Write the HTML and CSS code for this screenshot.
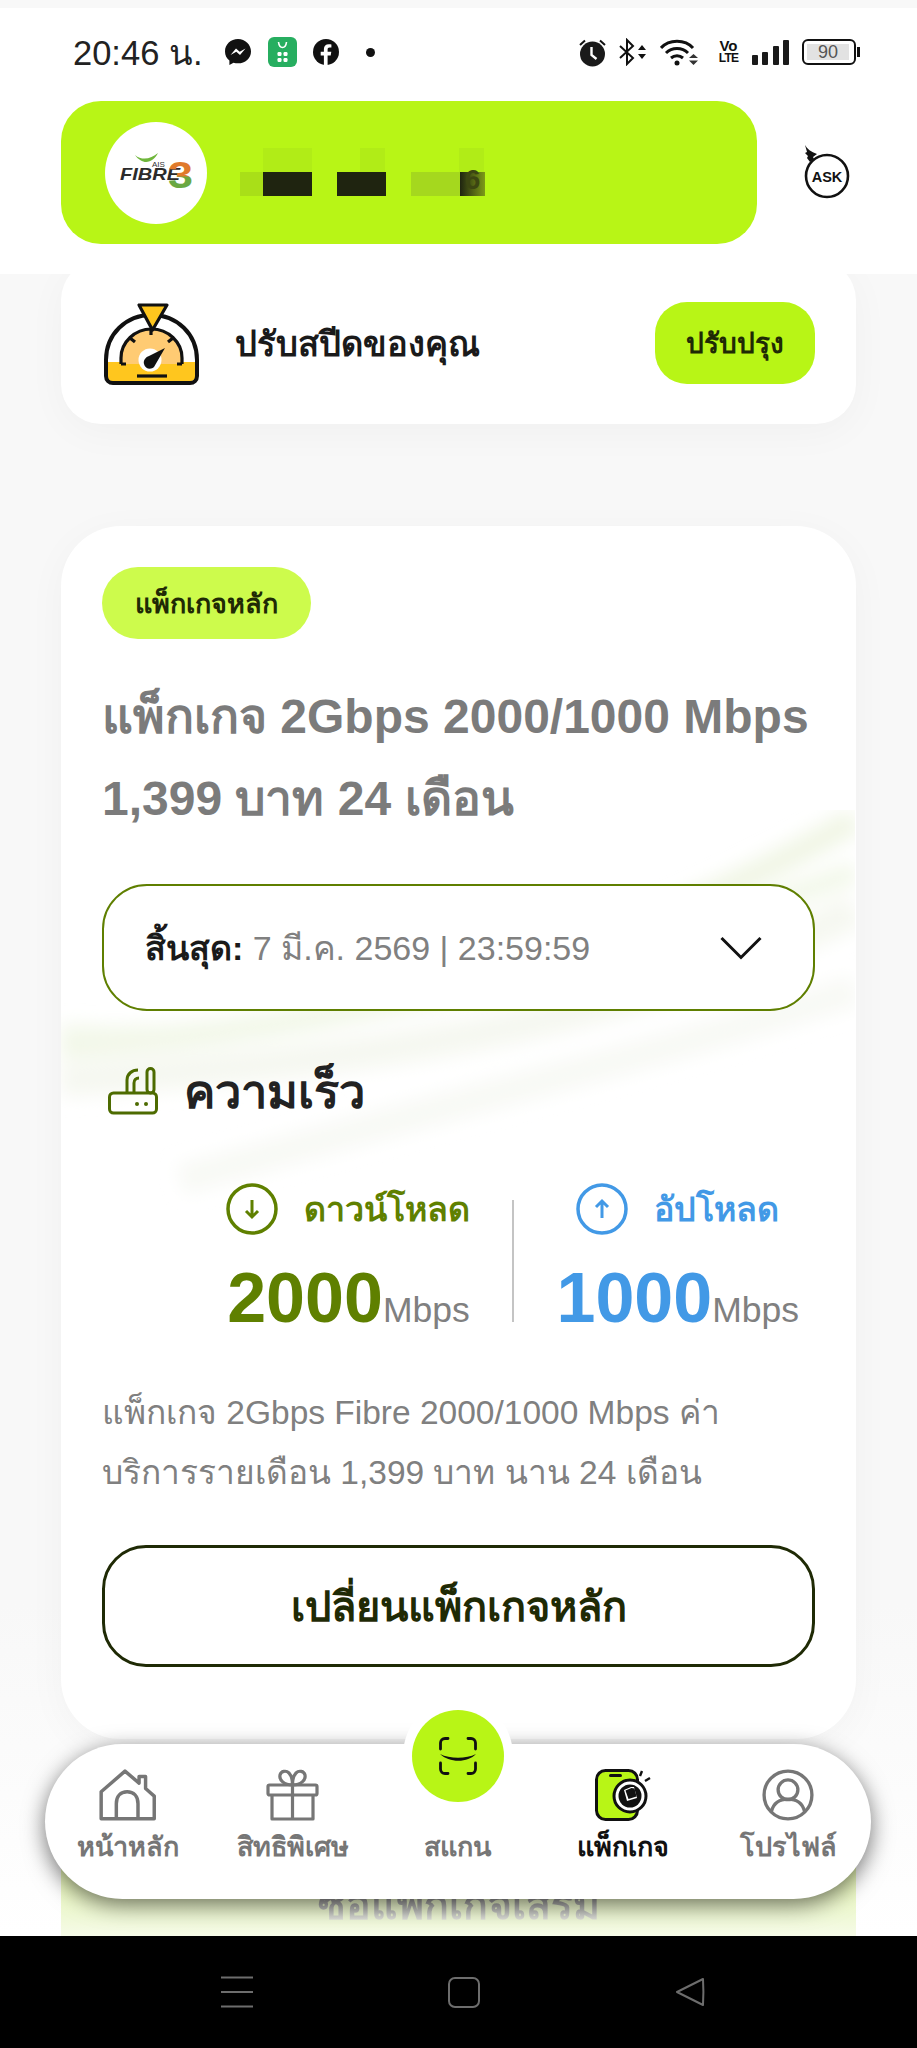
FILE: index.html
```html
<!DOCTYPE html>
<html lang="th">
<head>
    <meta charset="UTF-8">
    <meta name="viewport" content="width=device-width, initial-scale=1.0">
    <title>แพ็กเกจ</title>
    <link rel="stylesheet" href="styles.css">
</head>
<body>
<div class="screen">
    <header class="top">
        <div class="status">
            <div class="status-left">
                <span class="time">20:46 น.</span>
                <svg class="st-msg" viewBox="0 0 26 26"><path d="M13 0C5.800 0 0 5.400 0 12.400c0 3.800 1.700 6.900 4.400 9.100V26l4.100-2.300c1.400.4 2.900.6 4.500.6 7.200 0 13-5.200 13-11.900S20.200 0 13 0z" fill="#111"/><path d="M5.500 16 11 9.500l3.700 3.200L20.500 9.500 15 16l-3.700-3.200z" fill="#fff"/></svg>
                <svg class="st-app" viewBox="0 0 29 30"><rect width="29" height="30" rx="6" fill="#27ae60"/><path d="M10.500 5c.5 4 2 5.500 4 5.500s3.500-1.500 4-5.500" fill="none" stroke="#fff" stroke-width="1.600"/><g fill="#fff"><rect x="9.500" y="15" width="4" height="4" rx="1.200"/><rect x="15.500" y="15" width="4" height="4" rx="1.200"/><rect x="9.500" y="21" width="4" height="4" rx="1.200"/><rect x="15.500" y="21" width="4" height="4" rx="1.200"/></g></svg>
                <svg class="st-fb" viewBox="0 0 26 26"><circle cx="13" cy="13" r="13" fill="#111"/><path d="M14.600 26V16.500h3.100l.6-3.700h-3.700v-2.300c0-1.100.5-1.900 2-1.900h1.800V5.400c-.6-.1-1.600-.2-2.600-.2-3 0-4.900 1.700-4.900 4.900v2.700H7.700v3.700h3.200V26z" fill="#fff"/></svg>
                <span class="st-dot"></span>
            </div>
            <div class="status-right">
                <svg class="st-alarm" viewBox="0 0 27 29"><path d="M1 7 6 2.500M26 7 21 2.500" stroke="#111" stroke-width="2"/><circle cx="13.500" cy="16" r="12.500" fill="#1a1a1a"/><path d="M12.500 9v8l5 4" fill="none" stroke="#fff" stroke-width="2.400"/></svg>
                <svg class="st-bt" viewBox="0 0 28 28"><path d="M1 8 14 20l-6 6V2l6 6L1 20" fill="none" stroke="#111" stroke-width="2"/><path d="M19 12l4-5 4 5zM19 16l4 5 4-5z" fill="#111"/></svg>
                <svg class="st-wifi" viewBox="0 0 39 28"><g fill="none" stroke="#111" stroke-width="3"><path d="M1 10C9 1 25 1 33 10"/><path d="M6 15c6-6 16-6 22 0"/><path d="M11 20c3.500-3 8.500-3 12 0"/></g><circle cx="17" cy="25" r="2.500" fill="#111"/><path d="M29 20l4.500-4 4.500 4zM29 22.500l4.500 4.500 4.500-4.500z" fill="#333"/></svg>
                <div class="st-volte"><span>Vo</span><span>LTE</span></div>
                <div class="st-signal"><i></i><i></i><i></i><i></i></div>
                <div class="st-battery"><div class="battery-body"><span>90</span></div><i></i></div>
            </div>
        </div>
        <div class="profile-row">
            <div class="account">
                <div class="avatar">
                    <svg viewBox="0 0 102 102" width="102" height="102">
                        <defs>
                            <linearGradient id="three" x1="0" y1="0" x2="0" y2="1">
                                <stop offset="0.5" stop-color="#e07a2c"/>
                                <stop offset="0.55" stop-color="#6aa842"/>
                            </linearGradient>
                        </defs>
                        <path d="M30 33c7 6 16 4 23-2-5 10-15 13-23 2z" fill="#6fb63b"/>
                        <text x="47" y="45" class="logo-ais">AIS</text>
                        <text x="15" y="58" class="logo-fibre" textLength="60" lengthAdjust="spacingAndGlyphs">FIBRE</text>
                        <text x="63" y="66" class="logo-three" fill="url(#three)" textLength="25" lengthAdjust="spacingAndGlyphs">3</text>
                    </svg>
                </div>
                <div class="masked">
                    <div class="mask-row">
                        <i class="w23"></i><i class="w49 pale"></i><i class="w48"></i><i class="w25 pale"></i><i class="w74"></i><i class="w25 pale"></i>
                    </div>
                    <div class="mask-row">
                        <i class="w23 fade"></i><i class="w49 dark"></i><i class="w25"></i><i class="w49 dark"></i><i class="w25"></i><i class="w49 olive"></i><i class="w25 last">6</i>
                    </div>
                </div>
            </div>
            <svg class="ask" viewBox="0 0 46 54"><path d="M1 0c2 4 6 7 12 9l-4 3 1 2-4 3-3-4 1-2-3-3 2-1z" fill="#111"/><circle cx="23" cy="31" r="21" fill="#fff" stroke="#111" stroke-width="2.600"/><text x="23" y="36.500" text-anchor="middle" class="ask-text">ASK</text></svg>
        </div>
    </header>

    <main class="content">
        <section class="card speed-card">
            <div class="speed-left">
                <svg class="gauge" viewBox="0 0 95 83">
                    <path d="M2 58C2 32 22 13 47.500 13S93 32 93 58v16c0 4-3 7-7 7H9c-4 0-7-3-7-7z" fill="#fff"/>
                    <path d="M3.500 60h88v14c0 3-3 5.500-5.500 5.500H9c-3 0-5.500-2.500-5.500-5.500z" fill="#ffc61e"/>
                    <path d="M17 62V56C17 40 31 27 47.500 27S78 40 78 56v6z" fill="#ffcb73"/>
                    <path d="M17 62V56C17 40 31 27 47.500 27S78 40 78 56v6M47 27v6M26 36l5 4M69 36l-5 4M17 62h5M78 62h-5" fill="none" stroke="#111" stroke-width="3.200"/>
                    <path d="M2 58C2 32 22 13 47.500 13S93 32 93 58v16c0 4-3 7-7 7H9c-4 0-7-3-7-7z" fill="none" stroke="#111" stroke-width="4"/>
                    <circle cx="46" cy="58" r="11.500" fill="#fff"/>
                    <path d="M61 46 50 65c-3 3-9 2-10-3-1-4 2-7 5-8z" fill="#111"/>
                    <path d="M33 74h30" stroke="#111" stroke-width="3.200"/>
                    <path d="M35 3h28L48.500 28z" fill="#ffc61e" stroke="#111" stroke-width="3.200" stroke-linejoin="round"/>
                </svg>
                <h3 class="speed-title">ปรับสปีดของคุณ</h3>
            </div>
            <a class="upgrade">ปรับปรุง</a>
        </section>

        <section class="card main-card">
            <svg class="waves" viewBox="0 0 794 400" preserveAspectRatio="none">
                <defs><filter id="soft"><feGaussianBlur stdDeviation="9"/></filter></defs>
                <g fill="none" filter="url(#soft)">
                    <path d="M0 235C240 225 520 170 794 10" stroke="#f1f6e6" stroke-width="26"/>
                    <path d="M0 225C220 240 560 150 794 62" stroke="#f3f8ea" stroke-width="22"/>
                    <path d="M0 270C280 255 560 220 794 100" stroke="#f6f8f1" stroke-width="34"/>
                    <path d="M120 370C360 300 620 240 794 180" stroke="#f8f9f5" stroke-width="30"/>
                </g>
            </svg>
            <div class="card-body">
                <span class="tag">แพ็กเกจหลัก</span>
                <h2 class="plan-name">แพ็กเกจ 2Gbps 2000/1000 Mbps<br>1,399 บาท 24 เดือน</h2>

                <div class="expiry">
                    <p><b>สิ้นสุด:</b> 7 มี.ค. 2569 | 23:59:59</p>
                    <svg class="chev" viewBox="0 0 42 24"><path d="M1.500 2 21 21.500 40.500 2" fill="none" stroke="#111" stroke-width="3"/></svg>
                </div>

                <div class="speed-head">
                    <svg class="router" viewBox="0 0 50 48"><g fill="none" stroke="#4d6b00" stroke-width="3"><rect x="1.500" y="26" width="47" height="20" rx="4"/><rect x="39" y="1.500" width="7" height="24.500" rx="3.500"/><path d="M26 25v-9c0-3 2-5 5-5"/><path d="M19 25v-12c0-6 5-10 11-10"/></g><circle cx="29" cy="37" r="2" fill="#4d6b00"/><circle cx="38" cy="37" r="2" fill="#4d6b00"/></svg>
                    <h3>ความเร็ว</h3>
                </div>

                <div class="rates">
                    <div class="rate rate-down">
                        <div class="rate-label">
                            <svg viewBox="0 0 52 52"><circle cx="26" cy="26" r="24" fill="none" stroke="currentColor" stroke-width="3.500"/><path d="M26 17v17M20 28l6 6 6-6" fill="none" stroke="currentColor" stroke-width="3"/></svg>
                            <span>ดาวน์โหลด</span>
                        </div>
                        <div class="rate-value"><b>2000</b><small>Mbps</small></div>
                    </div>
                    <div class="rate-line"></div>
                    <div class="rate rate-up">
                        <div class="rate-label">
                            <svg viewBox="0 0 52 52"><circle cx="26" cy="26" r="24" fill="none" stroke="currentColor" stroke-width="3.500"/><path d="M26 35V18M20 24l6-6 6 6" fill="none" stroke="currentColor" stroke-width="3"/></svg>
                            <span>อัปโหลด</span>
                        </div>
                        <div class="rate-value"><b>1000</b><small>Mbps</small></div>
                    </div>
                </div>

                <p class="plan-desc">แพ็กเกจ 2Gbps Fibre 2000/1000 Mbps ค่า<br>บริการรายเดือน 1,399 บาท นาน 24 เดือน</p>
                <a class="change-btn">เปลี่ยนแพ็กเกจหลัก</a>
            </div>
        </section>

        <div class="addon"><span>ซื้อแพ็กเกจเสริม</span></div>

        <nav class="tabs">
            <a class="tab">
                <svg viewBox="0 0 53 48"><path d="M2 46V21L24 2l13 11V7h6v11l8 7v21zM16 46V32c0-7 4-11 10-11s10 4 10 11v14" fill="none" stroke="currentColor" stroke-width="3.200" stroke-linejoin="round"/></svg>
                <span>หน้าหลัก</span>
            </a>
            <a class="tab">
                <svg viewBox="0 0 53 52"><g fill="none" stroke="currentColor" stroke-width="3.200" stroke-linejoin="round"><rect x="2" y="16" width="49" height="10" rx="1.500"/><path d="M6 26v24h41V26M26.500 16v34M26.500 16C18 16 13 11 14 6c1-4 6-5 9-2 2 2 3.500 7 3.500 12zM26.500 16c8.500 0 13.500-5 12.500-10-1-4-6-5-9-2-2 2-3.500 7-3.500 12z"/></g></svg>
                <span>สิทธิพิเศษ</span>
            </a>
            <a class="tab tab-scan">
                <div class="scan-ring">
                    <div class="scan-btn">
                        <svg viewBox="0 0 38 38" width="38" height="38"><g fill="none" stroke="#111" stroke-width="2.800" stroke-linecap="round"><path d="M1.500 12V6c0-2.500 2-4.500 4.500-4.500h3M29 1.500h3c2.500 0 4.500 2 4.500 4.500v6M1.500 26v6c0 2.500 2 4.500 4.500 4.500h3M29 36.500h3c2.500 0 4.500-2 4.500-4.500v-6"/></g><path d="M1 17c10 5 26 5 36 0-8 9-27 9-36 0z" fill="#111"/></svg>
                    </div>
                </div>
                <span>สแกน</span>
            </a>
            <a class="tab tab-on">
                <svg viewBox="0 0 56 52"><rect x="1.500" y="1.500" width="41" height="49" rx="9" fill="#b8f516" stroke="#111" stroke-width="3"/><rect x="14" y="5" width="13" height="3" rx="1.500" fill="#111"/><circle cx="35" cy="27" r="16" fill="#fff" stroke="#111" stroke-width="3"/><circle cx="35" cy="27" r="11.500" fill="#111"/><path d="M29 21l7-3h3l3 11-10 3z" fill="#fff"/><path d="M30.500 21.500l6-2.500 3 .5 2 8-8 2.500z" fill="#111"/><path d="M45 7l2-5M50 12l5-3" stroke="#111" stroke-width="2.400"/></svg>
                <span>แพ็กเกจ</span>
            </a>
            <a class="tab">
                <svg viewBox="0 0 50 50"><g fill="none" stroke="currentColor" stroke-width="3.200"><circle cx="25" cy="25" r="23"/><circle cx="25" cy="20" r="9.500"/><path d="M9 41c2-8 8-12 16-12s14 4 16 12"/></g></svg>
                <span>โปรไฟล์</span>
            </a>
        </nav>
    </main>

    <footer class="sysbar">
        <svg viewBox="0 0 32 32" width="32" height="32"><path d="M0 1.500h32M0 16h32M0 30.500h32" stroke="#6d6d6d" stroke-width="2"/></svg>
        <svg viewBox="0 0 32 31" width="32" height="31"><rect x="1" y="1" width="30" height="29" rx="6" fill="none" stroke="#6d6d6d" stroke-width="2"/></svg>
        <svg viewBox="0 0 30 30" width="30" height="30"><path d="M28 2 2 15l26 13c.5-8 .5-18 0-26z" fill="none" stroke="#6d6d6d" stroke-width="2" stroke-linejoin="round"/></svg>
    </footer>
</div>
</body>
</html>
```

FILE: styles.css
```css
* {
    box-sizing: border-box;
}
html, body {
    margin: 0;
    padding: 0;
}
body {
    font-family: "Liberation Sans", "Noto Sans", "DejaVu Sans", sans-serif;
    color: #1c1c1c;
}
h2, h3, p {
    margin: 0;
}
.screen {
    width: 917px;
    height: 2048px;
    display: flex;
    flex-direction: column;
    overflow: hidden;
}

/* header */
.top {
    height: 274px;
    flex: none;
    background: #fff;
    border-top: 8px solid #f8f8f8;
    position: relative;
    z-index: 2;
}
.status {
    height: 60px;
    margin-top: 14px;
    padding: 0 57px 0 73px;
    display: flex;
    justify-content: space-between;
    align-items: center;
}
.status-left, .status-right {
    display: flex;
    align-items: center;
}
.time {
    width: 127px;
    font-size: 34.500px;
    color: #222;
    white-space: nowrap;
}
.st-msg { width: 26px; height: 26px; margin-left: 25px; }
.st-app { width: 29px; height: 30px; margin-left: 17px; }
.st-fb { width: 26px; height: 26px; margin-left: 16px; }
.st-dot {
    width: 9px;
    height: 9px;
    margin-left: 27px;
    border-radius: 50%;
    background: #111;
}
.st-alarm { width: 27px; height: 29px; }
.st-bt { width: 28px; height: 28px; margin-left: 13px; }
.st-wifi { width: 39px; height: 28px; margin-left: 13px; }
.st-volte {
    width: 19px;
    margin-left: 20px;
    display: flex;
    flex-direction: column;
    align-items: center;
    font-size: 15px;
    font-weight: 700;
    line-height: 12px;
    color: #111;
}
.st-volte span:last-child {
    font-size: 12px;
    letter-spacing: -0.8px;
}
.st-signal {
    width: 37px;
    height: 25px;
    margin-left: 14px;
    display: flex;
    align-items: flex-end;
    justify-content: space-between;
}
.st-signal i {
    width: 6px;
    background: #1a1a1a;
    border-radius: 1px;
}
.st-signal i:nth-child(1) { height: 10px; }
.st-signal i:nth-child(2) { height: 13px; }
.st-signal i:nth-child(3) { height: 19px; }
.st-signal i:nth-child(4) { height: 25px; }
.st-battery {
    margin-left: 13px;
    display: flex;
    align-items: center;
}
.battery-body {
    width: 54px;
    height: 26px;
    padding: 3px;
    border: 2px solid #111;
    border-radius: 6px;
}
.battery-body span {
    display: block;
    width: 42px;
    height: 16px;
    background: #e2e2e2;
    font-size: 18px;
    line-height: 16px;
    text-align: center;
    color: #555;
}
.st-battery i {
    width: 3px;
    height: 10px;
    margin-left: 1px;
    background: #111;
}
.profile-row {
    margin-top: 19px;
    padding: 0 67px 0 61px;
    display: flex;
    justify-content: space-between;
    align-items: flex-start;
}
.account {
    width: 696px;
    height: 143px;
    padding-left: 44px;
    background: #b8f516;
    border-radius: 40px;
    display: flex;
    align-items: center;
}
.avatar {
    width: 102px;
    height: 102px;
    flex: none;
    border-radius: 50%;
    background: #fff;
}
.logo-ais {
    font-size: 8px;
    fill: #333;
}
.logo-fibre {
    font-size: 17px;
    font-style: italic;
    font-weight: 700;
    fill: #2b2b2b;
}
.logo-three {
    font-size: 36px;
    font-weight: 700;
}
.masked {
    margin-left: 33px;
    margin-top: -2px;
}
.mask-row {
    height: 24px;
    display: flex;
}
.mask-row i {
    display: block;
    height: 24px;
}
.w23 { width: 23px; }
.w25 { width: 25px; }
.w48 { width: 48px; }
.w49 { width: 49px; }
.w74 { width: 74px; }
.pale { background: #b1ec17; }
.fade { background: #a9df18; }
.dark { background: #1f2410; }
.olive { background: #a5d81e; }
.mask-row .last {
    background: linear-gradient(90deg, #1f2410, #7d9a18);
    font-size: 28px;
    font-style: normal;
    font-weight: 700;
    line-height: 16px;
    text-align: center;
    color: #3c4612;
}
.ask {
    width: 46px;
    height: 54px;
    margin-top: 44px;
}
.ask-text {
    font-size: 14.500px;
    font-weight: 700;
    fill: #111;
}

/* content */
.content {
    flex: 1;
    position: relative;
    background: linear-gradient(#f8f8f8 80%, #fff);
    padding: 0 61px;
    overflow: hidden;
}
.card {
    background: #fff;
    box-shadow: 0 8px 40px rgba(0, 0, 0, .035);
}
.speed-card {
    height: 164px;
    margin-top: -14px;
    padding: 2px 41px 0 43px;
    border-radius: 40px;
    display: flex;
    align-items: center;
    justify-content: space-between;
}
.speed-left {
    display: flex;
    align-items: center;
}
.gauge {
    width: 95px;
    height: 83px;
}
.speed-title {
    margin-left: 36px;
    font-size: 34.500px;
    font-weight: 700;
    color: #1a1a1a;
}
.upgrade {
    width: 160px;
    height: 82px;
    border-radius: 32px;
    background: #b8f516;
    display: flex;
    align-items: center;
    justify-content: center;
    font-size: 28px;
    font-weight: 700;
    color: #1f2a05;
}
.main-card {
    height: 1213px;
    margin-top: 102px;
    border-radius: 60px;
    position: relative;
    overflow: hidden;
}
.waves {
    position: absolute;
    left: 0;
    top: 284px;
    width: 794px;
    height: 400px;
}
.card-body {
    position: relative;
    padding: 41px 41px 0;
}
.tag {
    display: inline-flex;
    align-items: center;
    justify-content: center;
    width: 209px;
    height: 72px;
    border-radius: 36px;
    background: #cdfb4c;
    font-size: 27px;
    font-weight: 700;
    color: #1f2a05;
}
.plan-name {
    margin-top: 37px;
    font-size: 48px;
    line-height: 82px;
    font-weight: 700;
    color: #7b7b7b;
    white-space: nowrap;
}
.expiry {
    height: 127px;
    margin-top: 44px;
    padding: 0 51px 0 41px;
    border: 2px solid #5f7f00;
    border-radius: 45px;
    background: #fff;
    display: flex;
    align-items: center;
    justify-content: space-between;
    font-size: 34px;
    color: #808080;
}
.expiry b {
    color: #1a1a1a;
}
.chev {
    width: 42px;
    height: 24px;
}
.speed-head {
    height: 48px;
    margin-top: 56px;
    padding-left: 6px;
    display: flex;
    align-items: center;
}
.router {
    width: 50px;
    height: 48px;
}
.speed-head h3 {
    margin-left: 26px;
    font-size: 47px;
    font-weight: 700;
    color: #222;
}
.rates {
    margin-top: 68px;
    padding-right: 16px;
    display: flex;
    justify-content: flex-end;
    align-items: center;
    gap: 42px;
}
.rate {
    display: flex;
    flex-direction: column;
    align-items: center;
}
.rate-down { color: #5f8000; }
.rate-up { color: #4299e6; }
.rate-label {
    height: 52px;
    display: flex;
    align-items: center;
    gap: 26px;
    font-size: 34px;
    font-weight: 700;
}
.rate-label svg {
    width: 52px;
    height: 52px;
}
.rate-value {
    margin-top: 23px;
    display: flex;
    align-items: baseline;
}
.rate-value b {
    font-size: 70px;
    line-height: 80px;
}
.rate-value small {
    font-size: 35.500px;
    color: #808080;
}
.rate-line {
    width: 2px;
    height: 122px;
    background: #c4c4c4;
}
.plan-desc {
    margin-top: 45px;
    font-size: 33.500px;
    line-height: 60px;
    color: #808080;
    white-space: nowrap;
}
.change-btn {
    height: 122px;
    margin-top: 42px;
    border: 3px solid #1f2a05;
    border-radius: 44px;
    background: #fff;
    display: flex;
    align-items: center;
    justify-content: center;
    font-size: 41.500px;
    font-weight: 700;
    color: #1f2a05;
}
.addon {
    height: 94px;
    margin-top: 123px;
    background: linear-gradient(#e4f5ae, #f0f9d8 60%, #fefefb);
    text-align: center;
    font-size: 41px;
    font-weight: 700;
}
.addon span {
    display: inline-block;
    line-height: 60px;
    margin-top: 13px;
    color: transparent;
    background: linear-gradient(#999 40%, #f4f6ee 85%);
    -webkit-background-clip: text;
    background-clip: text;
    filter: blur(.6px);
}

/* bottom tabs */
.tabs {
    position: absolute;
    left: 45px;
    top: 1470px;
    width: 826px;
    height: 155px;
    padding-top: 25px;
    border-radius: 78px;
    background: #fff;
    box-shadow: 0 6px 22px rgba(0, 0, 0, .55);
    display: grid;
    grid-template-columns: repeat(5, 1fr);
}
.tab {
    display: flex;
    flex-direction: column;
    align-items: center;
    color: #767676;
    font-size: 27px;
    font-weight: 700;
}
.tab svg {
    height: 52px;
}
.tab span {
    margin-top: 4px;
    white-space: nowrap;
}
.tab-on {
    color: #111;
}
.scan-ring {
    width: 110px;
    height: 113px;
    margin-top: -70px;
    border-radius: 50%;
    background: #fff;
    display: flex;
    align-items: center;
    justify-content: center;
}
.scan-btn {
    width: 92px;
    height: 92px;
    border-radius: 50%;
    background: #b8f516;
    display: flex;
    align-items: center;
    justify-content: center;
}
.tab-scan svg {
    height: 38px;
}
.tab-scan span {
    margin-top: 13px;
}

/* android bar */
.sysbar {
    height: 112px;
    flex: none;
    background: #000;
    padding: 0 212px 0 221px;
    display: flex;
    align-items: center;
    justify-content: space-between;
}
```
